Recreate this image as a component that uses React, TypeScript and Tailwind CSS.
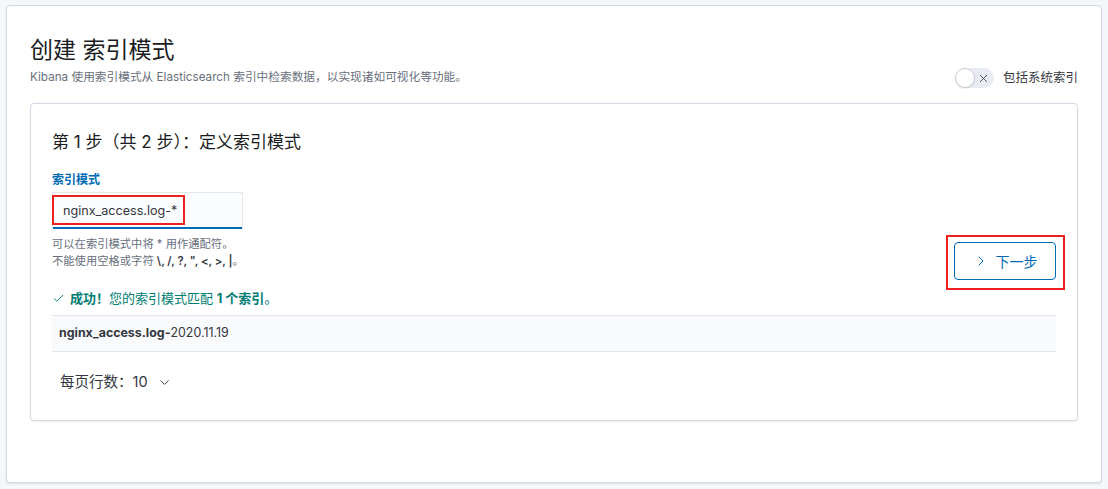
import React, { useState } from 'react';
import { Check, X, ChevronRight, ChevronDown } from 'lucide-react';

const font = 'font-["Inter","Noto_Sans_CJK_SC",sans-serif]';

const App = () => {
  const [includeSystem, setIncludeSystem] = useState(false);

  return (
    <div className={`min-h-screen w-[1108px] h-[489px] bg-[#f5f7fa] pt-[5px] pl-[6px] ${font}`}>
      {/* Page panel */}
      <div className="w-[1096px] h-[478px] bg-white border border-[#d3dae6] rounded-[4px] shadow-[0_1px_2px_rgba(0,0,0,0.1)] px-[23px] pt-[28px]">
        {/* Header */}
        <div className="flex items-end justify-between">
          <div>
            <h1 className="text-[23px] leading-[32px] text-[#1a1c21] font-normal">创建 索引模式</h1>
            <p className="mt-[3px] text-[11.7px] leading-[16px] text-[#69707d]">
              Kibana 使用索引模式从 Elasticsearch 索引中检索数据，以实现诸如可视化等功能。
            </p>
          </div>
          <div className="flex items-center gap-[9px] mb-[-3px]">
            <button
              onClick={() => setIncludeSystem(!includeSystem)}
              className="relative w-[39px] h-[20px] rounded-full bg-[#e9edf3] flex items-center"
            >
              <span className="absolute left-0 top-0 w-[20px] h-[20px] rounded-full bg-white border border-[#c9ced6] shadow-[0_1px_1px_rgba(0,0,0,0.08)]" />
              <X className="absolute left-[22px] h-[13px] w-[13px] text-[#343741]" strokeWidth={1.5} />
            </button>
            <span className="text-[12.5px] leading-[18px] text-[#343741]">包括系统索引</span>
          </div>
        </div>

        {/* Step card */}
        <div className="mt-[18px] bg-white border border-[#d3dae6] rounded-[4px] shadow-[0_1px_2px_rgba(0,0,0,0.08)] px-[21px] pt-[26px] pb-[28px]">
          <h2 className="text-[17px] leading-[24px] text-[#1a1c21] font-normal">第 1 步（共 2 步）：定义索引模式</h2>

          <div className="flex justify-between items-start">
            <div>
              <label className="block mt-[18px] text-[12px] leading-[16px] font-bold text-[#006bb4]">索引模式</label>
              <div className="relative mt-[4px] w-[191px] h-[37px] bg-[#fbfcfd] border border-[#e4e8ee] border-b-0 shadow-[inset_0_-2px_0_#006bb4] flex items-center pl-[10px]">
                <span className="text-[12.6px] text-[#343741]">nginx_access.log-*</span>
                {/* annotation */}
                <span className="absolute left-[-1px] top-[2px] w-[133px] h-[30px] border-2 border-[#ee1f1f] pointer-events-none" />
              </div>
              <div className="mt-[7px] text-[11.3px] leading-[17px] text-[#69707d]">
                <p>可以在索引模式中将 * 用作通配符。</p>
                <p>
                  不能使用空格或字符 <span className="text-[#343741] font-semibold">\, /, ?, ", &lt;, &gt;, |</span>。
                </p>
              </div>
            </div>

            <div className="relative mt-[88px]">
              <button className="w-[102px] h-[38px] rounded-[4px] border border-[#006bb4] bg-white flex items-center justify-center gap-[7px] text-[14px] text-[#006bb4]">
                <ChevronRight className="h-[16px] w-[16px]" strokeWidth={1.5} />
                <span>下一步</span>
              </button>
              {/* annotation */}
              <span className="absolute -left-[8px] -top-[7px] -right-[9px] -bottom-[10px] border-2 border-[#ee1f1f] pointer-events-none" />
            </div>
          </div>

          <div className="mt-[9px] flex items-center gap-[5px] text-[13px] leading-[18px] text-[#017d73]">
            <Check className="h-[13px] w-[13px]" strokeWidth={1.6} />
            <span>
              <b className="font-bold">成功！</b>您的索引模式匹配 <b className="font-bold">1 个索引</b>。
            </span>
          </div>

          <div className="mt-[8px] h-[37px] bg-[#f9fafc] border-y border-[#e0e5ee] flex items-center px-[7px] text-[12.4px] text-[#343741]">
            <span className="font-bold">nginx_access.log-</span>
            <span>2020.11.19</span>
          </div>

          <div className="mt-[20px] ml-[8px] flex items-center gap-[9px] text-[14.5px] leading-[20px] text-[#343741]">
            <span>每页行数：10</span>
            <ChevronDown className="h-[15px] w-[15px]" strokeWidth={1.5} />
          </div>
        </div>
      </div>
    </div>
  );
};

export default App;
